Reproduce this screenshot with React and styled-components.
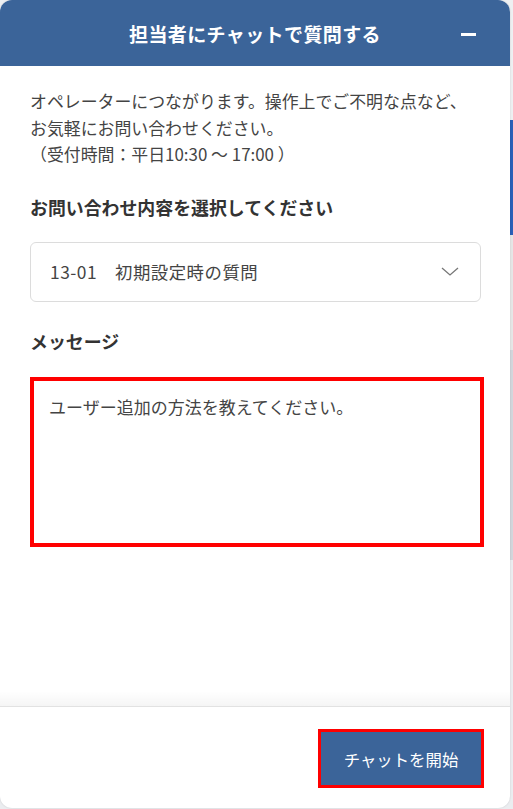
import styled, { createGlobalStyle } from "styled-components";

const Global = createGlobalStyle`
  html, body {
    margin: 0;
    padding: 0;
    background: #e9eaec;
  }
  * {
    box-sizing: border-box;
  }
`;

const Page = styled.div`
  width: 513px;
  height: 809px;
  display: flex;
  font-family: "Noto Sans CJK JP", "Noto Sans", sans-serif;
  background: linear-gradient(
    to bottom,
    #eef0f2 0 120px,
    #2a60b8 120px 235px,
    #e6e6e6 235px 350px,
    #d3d6dc 350px 560px,
    #ebedf0 560px
  );
`;

const Panel = styled.div`
  width: 510px;
  height: 808px;
  background: #fff;
  border-radius: 12px;
  overflow: hidden;
  display: flex;
  flex-direction: column;
  box-shadow: 0 0 2px rgba(0, 0, 0, 0.15);
`;

const Header = styled.header`
  height: 66px;
  background: #3b6499;
  color: #fff;
  display: flex;
  align-items: center;
  justify-content: center;
  position: relative;
  flex-shrink: 0;
`;

const Title = styled.h1`
  margin: 0;
  font-size: 19px;
  font-weight: 700;
  letter-spacing: 0.4px;
  line-height: 1;
`;

const Minimize = styled.span`
  position: absolute;
  right: 34px;
  top: 33px;
  width: 15px;
  height: 3px;
  background: #fff;
`;

const Body = styled.main`
  flex: 1;
  padding: 22px 29px 0 30px;
  display: flex;
  flex-direction: column;
`;

const Intro = styled.p`
  margin: 0;
  font-size: 16.9px;
  line-height: 26.5px;
  color: #444;
`;

const Label = styled.div`
  font-size: 17.9px;
  font-weight: 700;
  color: #333;
  line-height: 24px;
  margin-top: ${({ $top }) => $top}px;
`;

const Select = styled.div`
  margin-top: 23px;
  height: 60px;
  border: 1px solid #dcdcdc;
  border-radius: 6px;
  display: flex;
  align-items: center;
  justify-content: space-between;
  padding: 0 21px 0 19px;
  font-size: 17.4px;
  letter-spacing: 0.5px;
  color: #444;
`;

const Chevron = styled.svg`
  width: 18px;
  height: 10px;
`;

const Message = styled.div`
  margin-top: 24px;
  margin-right: -3px;
  height: 170px;
  border: 4px solid #ff0000;
  padding: 14px 15px;
  font-size: 17px;
  line-height: 24px;
  color: #444;
`;

const Footer = styled.footer`
  position: relative;
  height: 102px;
  flex-shrink: 0;
  border-top: 1px solid #e2e2e2;
  display: flex;
  justify-content: flex-end;
  align-items: flex-start;
  padding: 22px 26px 0 0;

  &::before {
    content: "";
    position: absolute;
    left: 0;
    right: 0;
    top: -16px;
    height: 15px;
    background: linear-gradient(to bottom, rgba(0, 0, 0, 0), rgba(0, 0, 0, 0.04));
  }
`;

const StartButton = styled.button`
  width: 166px;
  height: 59px;
  background: #3b6499;
  border: 3px solid #ff0000;
  color: #fff;
  font-family: inherit;
  font-size: 16.4px;
  padding: 0;
  cursor: pointer;
`;

export default function App() {
  return (
    <>
      <Global />
      <Page>
        <Panel>
          <Header>
            <Title>担当者にチャットで質問する</Title>
            <Minimize />
          </Header>

          <Body>
            <Intro>
              オペレーターにつながります。操作上でご不明な点など、
              <br />
              お気軽にお問い合わせください。
              <br />
              （受付時間：平日10:30 ～ 17:00 ）
            </Intro>

            <Label $top={27}>お問い合わせ内容を選択してください</Label>
            <Select>
              <span>13-01　初期設定時の質問</span>
              <Chevron viewBox="0 0 18 10">
                <polyline points="1,1 9,8 17,1" fill="none" stroke="#777" strokeWidth="1.3" />
              </Chevron>
            </Select>

            <Label $top={27}>メッセージ</Label>
            <Message>ユーザー追加の方法を教えてください。</Message>
          </Body>

          <Footer>
            <StartButton>チャットを開始</StartButton>
          </Footer>
        </Panel>
      </Page>
    </>
  );
}
